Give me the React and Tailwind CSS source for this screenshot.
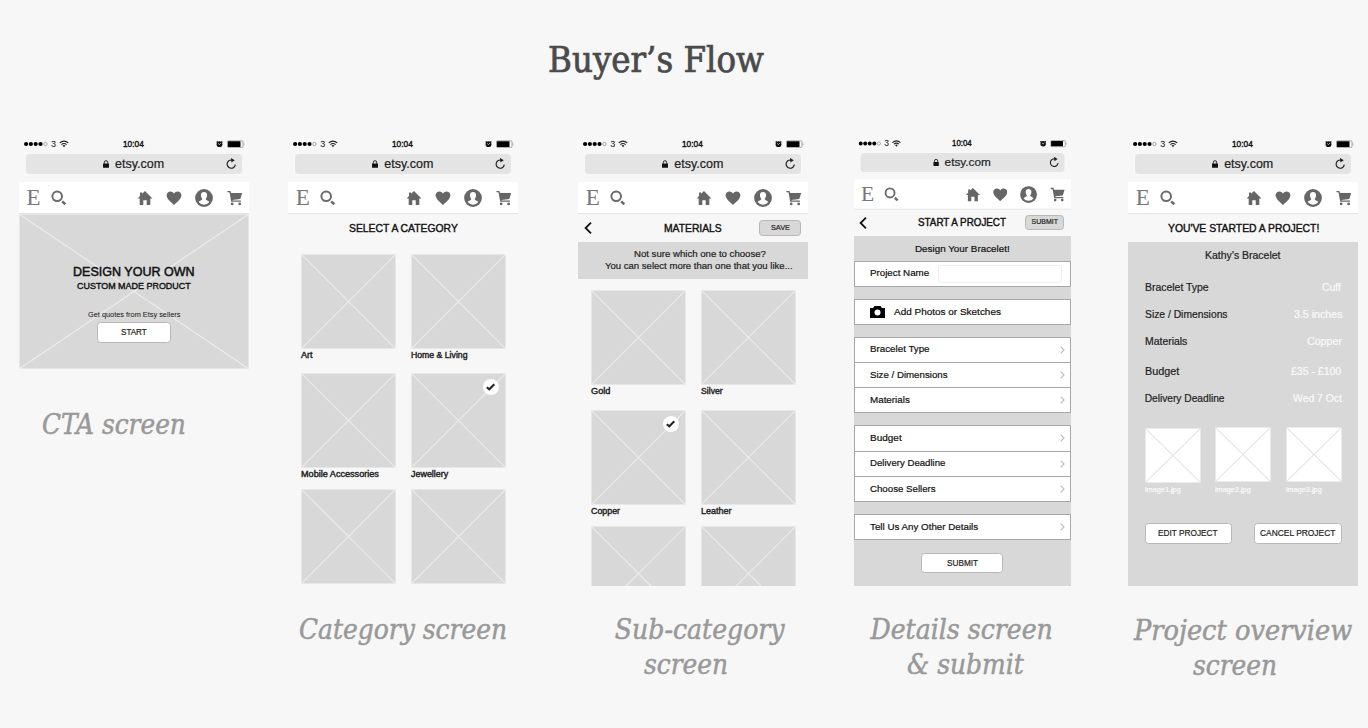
import { useLayoutEffect, useRef, useState } from "react";

// Single line of text condensed or widened to an exact width.
function Text({ w, className = "", children }) {
  const ref = useRef(null);
  const [scale, setScale] = useState(1);
  useLayoutEffect(() => {
    const natural = ref.current.offsetWidth;
    if (natural) setScale(w / natural);
  }, [w, children]);
  return (
    <span className={`block shrink-0 whitespace-nowrap ${className}`} style={{ width: w }}>
      <span ref={ref} className="inline-block origin-left" style={{ transform: `scaleX(${scale})` }}>
        {children}
      </span>
    </span>
  );
}

const medium = "[-webkit-text-stroke:0.4px_currentColor]";
const light = "[-webkit-text-stroke:0.2px_currentColor]";

function StatusBar() {
  return (
    <div className="flex h-[13px] items-center pl-[5px] text-[#111]">
      <svg width="24" height="6" viewBox="0 0 24 6">
        {[2.1, 6.9, 11.7, 16.5].map((x) => (
          <circle key={x} cx={x} cy="3" r="2.1" fill="#000" />
        ))}
        <circle cx="21.4" cy="3" r="1.7" fill="none" stroke="#777" strokeWidth="0.6" />
      </svg>
      <Text w={5} className="ml-[3px] text-[9px] leading-[14px]">3</Text>
      <svg className="ml-[3px]" width="10" height="8" viewBox="0 0 10 8" fill="none" stroke="#222" strokeWidth="1.2">
        <path d="M0.7 2.9 Q5 -0.8 9.3 2.9" />
        <path d="M2.4 4.6 Q5 2.4 7.6 4.6" />
        <path d="M3.5 5.6 Q5 4.5 6.5 5.6 L5 7.3Z" fill="#222" stroke="none" />
      </svg>
      <Text w={21} className={`ml-[54px] text-[8.7px] leading-[14px] ${medium}`}>10:04</Text>
      <svg className="ml-[72px]" width="7" height="8" viewBox="0 0 7 8">
        <circle cx="3.5" cy="4.2" r="2.9" fill="#111" />
        <path d="M0.6 2.3 L1.6 1.4 M6.4 2.3 L5.4 1.4" stroke="#111" strokeWidth="1.1" />
        <path d="M2.2 3.5 L3.5 4.5 L4.9 3.1" stroke="#ddd" strokeWidth="0.8" fill="none" />
      </svg>
      <svg className="ml-[4px]" width="18" height="8" viewBox="0 0 18 8">
        <rect x="0.4" y="0.8" width="15.6" height="6.6" rx="1" fill="#f7f7f7" stroke="#777" strokeWidth="0.6" />
        <rect x="0.9" y="1.3" width="12.6" height="5.6" rx="0.4" fill="#000" />
        <path d="M16.8 2.8 Q17.9 4.1 16.8 5.4Z" fill="#555" />
      </svg>
    </div>
  );
}

function AddressBar() {
  return (
    <div className="mx-[7px] mt-[4px] flex h-[20px] items-center rounded-[4px] bg-[#e4e4e4] text-[#222]">
      <svg className="ml-[77px]" width="6" height="8" viewBox="0 0 6 8">
        <rect x="0" y="3.4" width="6" height="4.4" rx="0.5" fill="#111" />
        <path d="M1.3 3.8 V2.4 A1.7 1.7 0 0 1 4.7 2.4 V3.8" fill="none" stroke="#111" strokeWidth="0.9" />
      </svg>
      <Text w={49} className={`ml-[6px] text-[12.5px] leading-[18px] ${light}`}>etsy.com</Text>
      <svg className="ml-[61.5px]" width="11" height="12" viewBox="0 0 11 12">
        <path d="M6.4 2.2 A4.1 4.1 0 1 0 9.3 6.6" fill="none" stroke="#222" strokeWidth="1.2" />
        <path d="M5 0 L8.8 2.3 L5.4 4.6Z" fill="#222" />
      </svg>
    </div>
  );
}

function NavBar() {
  return (
    <div className="mt-[8px] flex h-[32px] items-center border-b border-[#e3e3e3] bg-white text-[#666]">
      <Text w={14} className="ml-[7.5px] font-['Liberation_Serif',serif] text-[23px] leading-[30px] text-[#777]">E</Text>
      <svg className="ml-[10.7px]" width="16" height="16" viewBox="0 0 16 16" fill="none" stroke="#6b6b6b">
        <circle cx="6.2" cy="6.3" r="4.8" strokeWidth="2" />
        <path d="M11.2 11.4 L14.3 14.2" strokeWidth="2.6" />
      </svg>
      <svg className="ml-[70px]" width="16" height="16" viewBox="0 0 16 16" fill="currentColor">
        <path d="M8 1 L15.5 8.6 H13.3 V15 H9.7 V10.2 H6.3 V15 H2.7 V8.6 H0.5 L3 6 V2.6 H5.2 V3.8Z" />
      </svg>
      <svg className="ml-[13px]" width="16" height="16" viewBox="0 0 16 16" fill="currentColor">
        <path d="M8 15 C6.5 13.2 0.6 9.6 0.6 5.3 C0.6 1.2 5.9 0 8 3.6 C10.1 0 15.4 1.2 15.4 5.3 C15.4 9.6 9.5 13.2 8 15Z" />
      </svg>
      <svg className="ml-[13px]" width="18" height="18" viewBox="0 0 18 18">
        <circle cx="9" cy="9" r="8.9" fill="#666" />
        <path d="M9 3 C11.2 3 12.2 4.3 12 6.8 C11.9 8.6 11 9.4 10.7 10.1 C10.7 11.5 13.3 11.4 14.3 13.1 A6.8 6.8 0 0 1 3.7 13.1 C4.7 11.4 7.3 11.5 7.3 10.1 C7 9.4 6.1 8.6 6 6.8 C5.8 4.3 6.8 3 9 3Z" fill="#fff" />
      </svg>
      <svg className="ml-[13.4px]" width="16" height="16" viewBox="0 0 16 16" fill="currentColor">
        <path d="M0.4 0.9 H3.4 L4.2 3 H15.2 L13.3 9 L5.5 9.9 L5.7 10.5 H13.9 V11.8 H4.2 L2.5 2.3 H0.4Z" />
        <circle cx="5.2" cy="13.9" r="1.4" />
        <circle cx="12.7" cy="13.9" r="1.4" />
      </svg>
    </div>
  );
}

function Header() {
  return (
    <div className="h-[77px] w-[230px]">
      <StatusBar />
      <AddressBar />
      <NavBar />
    </div>
  );
}

function Crossed({ className, line = "#ebebeb", fill = "#d8d8d8" }) {
  return (
    <svg className={`block shrink-0 ${className}`} viewBox="0 0 100 100" preserveAspectRatio="none">
      <rect width="100" height="100" fill={fill} />
      <path d="M0 0 L100 100 M100 0 L0 100" stroke={line} strokeWidth="1.2" vectorEffect="non-scaling-stroke" />
      <rect width="100" height="100" fill="none" stroke={line} strokeWidth="1.6" vectorEffect="non-scaling-stroke" />
    </svg>
  );
}

function Tile({ label, w, checked }) {
  return (
    <div className="relative">
      <Crossed className="h-[95px] w-[95px]" />
      {checked && (
        <svg className="absolute top-[6px] right-[7px]" width="16" height="16" viewBox="0 0 16 16">
          <circle cx="8" cy="8" r="8" fill="#fff" />
          <path d="M3.8 8.2 L6.3 10.3 L11.3 5.3" fill="none" stroke="#222" strokeWidth="2" />
        </svg>
      )}
      {label && <Text w={w} className={`text-[8.7px] leading-[12px] text-[#222] ${medium}`}>{label}</Text>}
    </div>
  );
}

function Tiles({ items }) {
  return (
    <div className="ml-[12.7px] grid grid-cols-[95px_95px] grid-rows-[119.5px_116px_95px] gap-x-[15px]">
      {items.map(([label, w, checked], i) => (
        <Tile key={i} label={label} w={w} checked={checked} />
      ))}
    </div>
  );
}

function BackChevron() {
  return (
    <svg width="8" height="12" viewBox="0 0 8 12">
      <path d="M7 0.7 L1.6 6 L7 11.3" fill="none" stroke="#111" strokeWidth="1.8" />
    </svg>
  );
}

function Button({ w, className, children }) {
  return (
    <div className={`flex items-center justify-center rounded-[3.5px] border border-[#b8b8b8] text-[#222] ${light} ${className}`}>
      <Text w={w}>{children}</Text>
    </div>
  );
}

function Row({ label, w }) {
  return (
    <div className="flex h-[25.3px] items-center border-b border-[#a8a8a8] pl-[15px] pr-[5px]">
      <Text w={w}>{label}</Text>
      <svg className="ml-auto" width="5" height="8" viewBox="0 0 5 8">
        <path d="M0.7 0.6 L4 4 L0.7 7.4" fill="none" stroke="#bbb" strokeWidth="1.1" />
      </svg>
    </div>
  );
}

function Group({ rows }) {
  return (
    <div className="mt-[11.8px] border-x border-t border-[#a8a8a8] bg-white">
      {rows.map(([label, w]) => (
        <Row key={label} label={label} w={w} />
      ))}
    </div>
  );
}

function Caption({ lines, className }) {
  return (
    <div className={`flex flex-col items-center font-['DejaVu_Serif_Condensed','DejaVu_Serif',serif] text-[28px] leading-[35px] text-[#999] italic [-webkit-text-stroke:0.5px_currentColor] ${className}`}>
      {lines.map(([line, w, shift = ""]) => (
        <Text key={line} w={w} className={shift}>{line}</Text>
      ))}
    </div>
  );
}

function CtaScreen() {
  return (
    <div className="ml-[19px] w-[230px] shrink-0">
      <Header />
      <div className="relative h-[155px]">
        <Crossed className="h-[155px] w-[230px]" />
        <div className="absolute inset-0 flex flex-col items-center text-[#111]">
          <Text w={121.5} className="mt-[50px] text-[13px] leading-[16px] [-webkit-text-stroke:0.5px_currentColor]">DESIGN YOUR OWN</Text>
          <Text w={114} className={`text-[9.5px] leading-[12px] ${medium}`}>CUSTOM MADE PRODUCT</Text>
          <Text w={92.5} className="mt-[17px] text-[7.8px] leading-[12px]">Get quotes from Etsy sellers</Text>
          <Button w={26} className="mt-[1px] h-[21px] w-[74px] bg-white text-[8.7px]">START</Button>
        </div>
      </div>
      <Caption className="mt-[38px] -ml-[41px]" lines={[["CTA screen", 144]]} />
    </div>
  );
}

function CategoryScreen() {
  return (
    <div className="ml-[39.3px] w-[230px] shrink-0">
      <Header />
      <div className="flex h-[39.5px] justify-center">
        <Text w={108.5} className={`text-[10.5px] leading-[29px] text-[#111] ${medium}`}>SELECT A CATEGORY</Text>
      </div>
      <Tiles
        items={[["Art", 11.5], ["Home & Living", 57], ["Mobile Accessories", 77.5], ["Jewellery", 37, true], [], []]}
      />
      <Caption className="mt-[28px]" lines={[["Category screen", 208]]} />
    </div>
  );
}

function MaterialsScreen() {
  return (
    <div className="ml-[60px] w-[230px] shrink-0">
      <Header />
      <div className="flex h-[27.5px] items-center pl-[5.5px]">
        <BackChevron />
        <Text w={58} className={`ml-[72.5px] text-[10.5px] leading-[28px] text-[#111] ${medium}`}>MATERIALS</Text>
        <Button w={18.5} className="ml-[37px] h-[16px] w-[42px] bg-[#d8d8d8] text-[7.5px]">SAVE</Button>
      </div>
      <div className={`flex h-[37px] flex-col items-center bg-[#d8d8d8] pt-[6px] pl-[12px] text-[9.5px] leading-[12.3px] text-[#222] ${light}`}>
        <Text w={131.5}>Not sure which one to choose?</Text>
        <Text w={188}>You can select more than one that you like...</Text>
      </div>
      <div className="mt-[11.5px] h-[296px] overflow-hidden">
        <Tiles items={[["Gold", 19], ["Silver", 22], ["Copper", 29.5, true], ["Leather", 30], [], []]} />
      </div>
      <Caption className="mt-[26px] -ml-[1px] pr-[13px]" lines={[["Sub-category", 170, "ml-[27px]"], ["screen", 84]]} />
    </div>
  );
}

function DetailsScreen() {
  return (
    <div className="ml-[45.7px] w-[217px] shrink-0">
      <div className="h-[72.5px] origin-top-left scale-[0.9435]">
        <Header />
      </div>
      <div className="flex h-[26px] items-center pl-[5px]">
        <BackChevron />
        <Text w={87.5} className={`ml-[51.5px] text-[10px] leading-[26px] text-[#111] ${medium}`}>START A PROJECT</Text>
        <Button w={26} className="ml-[19px] h-[15px] w-[39px] bg-[#d8d8d8] text-[7px]">SUBMIT</Button>
      </div>
      <div className={`h-[350.5px] bg-[#d8d8d8] text-[9.7px] text-[#111] ${light}`}>
        <div className="flex h-[25.5px] justify-center">
          <Text w={94.5} className="leading-[26px]">Design Your Bracelet!</Text>
        </div>
        <div className="flex h-[25.5px] items-center border border-[#a8a8a8] bg-white pl-[15px]">
          <Text w={59.5}>Project Name</Text>
          <div className="ml-[9px] h-[18px] w-[124px] rounded-[3px] border border-[#eee]" />
        </div>
        <div className="mt-[12.3px] flex h-[26px] items-center border border-[#a8a8a8] bg-white pl-[15px]">
          <svg width="15" height="12" viewBox="0 0 15 12">
            <path d="M0 2 H3.2 L4.4 0 H10.6 L11.8 2 H15 V12 H0Z" fill="#000" />
            <circle cx="7.5" cy="6.6" r="3" fill="#fff" />
          </svg>
          <Text w={107} className="ml-[9px]">Add Photos or Sketches</Text>
        </div>
        <Group rows={[["Bracelet Type", 59.5], ["Size / Dimensions", 78], ["Materials", 39.5]]} />
        <Group rows={[["Budget", 32], ["Delivery Deadline", 75.5], ["Choose Sellers", 66]]} />
        <Group rows={[["Tell Us Any Other Details", 108]]} />
        <Button w={31} className="mx-auto mt-[13px] h-[20px] w-[82px] bg-white text-[8.5px]">SUBMIT</Button>
      </div>
      <Caption className="mt-[26px] pr-[2px]" lines={[["Details screen", 182], ["& submit", 117, "ml-[9px]"]]} />
    </div>
  );
}

const DETAILS = [
  ["Bracelet Type", 63.5, "Cuff", 19.5, "h-[27px]"],
  ["Size / Dimensions", 83, "3.5 inches", 48, "h-[27px]"],
  ["Materials", 42, "Copper", 34.5, "h-[27px]"],
  ["Budget", 34, "£35 - £100", 50.5, "mt-[3px] h-[27px]"],
  ["Delivery Deadline", 80, "Wed 7 Oct", 49, "h-[27px]"],
];

function OverviewScreen() {
  return (
    <div className="ml-[57.2px] w-[230px] shrink-0">
      <Header />
      <div className="flex h-[27.5px] justify-center">
        <Text w={151} className={`text-[10.5px] leading-[29px] text-[#111] ${medium}`}>YOU'VE STARTED A PROJECT!</Text>
      </div>
      <div className={`h-[344.5px] bg-[#d8d8d8] px-[16.5px] text-[10.2px] text-[#222] ${light}`}>
        <div className="flex h-[32.5px] justify-center pr-[1px]">
          <Text w={75} className="leading-[27px]">Kathy’s Bracelet</Text>
        </div>
        {DETAILS.map(([label, lw, value, vw, cls]) => (
          <div key={label} className={`flex items-center justify-between ${cls}`}>
            <Text w={lw}>{label}</Text>
            <Text w={vw} className="text-[#fafafa]">{value}</Text>
          </div>
        ))}
        <div className="mt-[15px] flex justify-between text-[7.5px] leading-[13px] text-[#fafafa]">
          <div className="pt-[1px]">
            <Crossed className="h-[55px] w-[56px]" fill="#fff" line="#e5e5e5" />
            <Text w={36}>image1.jpg</Text>
          </div>
          <div>
            <Crossed className="mb-[1px] h-[55px] w-[56px]" fill="#fff" line="#e5e5e5" />
            <Text w={36}>image2.jpg</Text>
          </div>
          <div>
            <Crossed className="mb-[1px] h-[55px] w-[56px]" fill="#fff" line="#e5e5e5" />
            <Text w={36}>image3.jpg</Text>
          </div>
        </div>
        <div className="mt-[27px] flex justify-between text-[8.7px]">
          <Button w={60} className="h-[21px] w-[87.5px] bg-white">EDIT PROJECT</Button>
          <Button w={75.5} className="h-[21px] w-[87.5px] bg-white">CANCEL PROJECT</Button>
        </div>
      </div>
      <Caption className="mt-[27px] -mr-[1px] pr-[2px]" lines={[["Project overview", 218], ["screen", 84, "mr-[16px]"]]} />
    </div>
  );
}

export default function App() {
  return (
    <main className="h-[728px] w-[1368px] overflow-hidden bg-[#f7f7f7] font-['Liberation_Sans',Arial,sans-serif]">
      <h1 className="flex h-[137px] justify-center pt-[40px] pr-[56px] font-['DejaVu_Serif_Condensed','DejaVu_Serif',serif] text-[35px] leading-[41px] text-[#4a4a4a] [-webkit-text-stroke:0.7px_currentColor]">
        <Text w={216}>Buyer’s Flow</Text>
      </h1>
      <div className="flex items-start">
        <CtaScreen />
        <CategoryScreen />
        <MaterialsScreen />
        <DetailsScreen />
        <OverviewScreen />
      </div>
    </main>
  );
}
